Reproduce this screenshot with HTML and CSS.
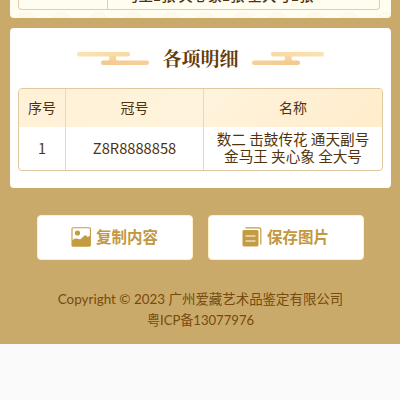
FILE: index.html
```html
<!DOCTYPE html>
<html lang="zh-CN">
<head>
<meta charset="utf-8">
<title>各项明细</title>
<link rel="stylesheet" href="styles.css">
</head>
<body>
<main class="page">
  <section class="summary">
    <div class="summary-table">
      <div class="summary-label"></div>
      <div class="summary-value"><span>马王1张 夹心象1张 全大号1张</span></div>
    </div>
    <svg class="waves" width="381" height="8" viewBox="0 0 381 8">
      <defs>
        <pattern id="wave" width="36" height="12" patternUnits="userSpaceOnUse">
          <g fill="none" stroke="#fbf3dc" stroke-width="1.2">
            <circle cx="16" cy="12" r="9"/><circle cx="16" cy="12" r="6"/><circle cx="16" cy="12" r="3"/>
          </g>
        </pattern>
      </defs>
      <rect width="381" height="8" fill="url(#wave)"/>
    </svg>
  </section>

  <section class="detail">
    <header class="detail-head">
      <svg class="cloud" width="74" height="16" viewBox="0 0 74 16">
        <defs>
          <linearGradient id="c1"><stop offset="0" stop-color="#fbe3b4"/><stop offset="1" stop-color="#f8d9a2"/></linearGradient>
          <linearGradient id="c2"><stop offset="0" stop-color="#f4c98d"/><stop offset="1" stop-color="#f6d09b"/></linearGradient>
        </defs>
        <path d="M32 5h9q-2 3 0 6h-9q3-3 0-6z" fill="#f7d49c"/>
        <rect x="1" y="2" width="53" height="4.4" rx="2" fill="url(#c1)"/>
        <rect x="25" y="10.6" width="48" height="4.4" rx="2" fill="url(#c2)"/>
      </svg>
      <h2>各项明细</h2>
      <svg class="cloud flip" width="74" height="16" viewBox="0 0 74 16">
        <path d="M32 5h9q-2 3 0 6h-9q3-3 0-6z" fill="#f7d49c"/>
        <rect x="1" y="2" width="53" height="4.4" rx="2" fill="url(#c1)"/>
        <rect x="25" y="10.6" width="48" height="4.4" rx="2" fill="url(#c2)"/>
      </svg>
    </header>
    <div class="table">
      <div class="row head"><div>序号</div><div>冠号</div><div>名称</div></div>
      <div class="row"><div>1</div><div class="code">Z8R8888858</div><div class="names">数二 击鼓传花 通天副号<br>金马王 夹心象 全大号</div></div>
    </div>
  </section>

  <div class="actions">
    <button class="btn">
      <svg width="20" height="20" viewBox="0 0 20 20">
        <rect x="1" y=".7" width="18.4" height="18.6" rx="1.2" fill="#fff" stroke="#c59b42" stroke-width="1.1"/>
        <circle cx="6.5" cy="6" r="2.6" fill="#c59b42"/>
        <path d="M1 13.500Q3.500 11 5.500 11.500T9.500 12.200L13.500 8.500Q14.800 7.500 16 9.500Q17 10.500 19 8.500V19H1z" fill="#c59b42"/>
      </svg>
      <span>复制内容</span>
    </button>
    <button class="btn">
      <svg width="20" height="20" viewBox="0 0 20 20">
        <path d="M3.500 .8H17q1.800 0 1.800 1.800V17.500" fill="none" stroke="#c59b42" stroke-width="1.200"/>
        <rect x=".5" y="3" width="16" height="16.500" rx="1.500" fill="#c59b42"/>
        <path d="M3.500 9h10M3.500 14h10" stroke="#fff" stroke-width="1.200"/>
      </svg>
      <span>保存图片</span>
    </button>
  </div>

  <footer class="footer">
    <p>Copyright © 2023 广州爱藏艺术品鉴定有限公司</p>
    <p class="icp">粤ICP备13077976</p>
  </footer>
</main>
</body>
</html>
```
FILE: styles.css
```css
* { box-sizing: border-box; }
body {
  margin: 0;
  background: #fafafa;
  color: #50330e;
  font-family: "Noto Sans CJK SC", sans-serif;
}
.page {
  height: 344px;
  background: #caaa6a;
  padding: 0 9px 0 10px;
  overflow: hidden;
}
.summary {
  height: 18px;
  background: #fffdf0;
  border-radius: 0 0 4px 4px;
  padding: 0 11px 0 8px;
  overflow: hidden;
}
.summary-table {
  height: 10px;
  display: flex;
  border: 1px solid #e0cfa9;
  border-top: 0;
  border-radius: 0 0 4px 4px;
  overflow: hidden;
}
.summary-label { width: 89px; border-right: 1px solid #e0cfa9; }
.summary-value {
  flex: 1;
  display: flex;
  align-items: flex-end;
  font-size: 14.4px;
  font-weight: 500;
  line-height: 20px;
  padding: 0 0 4px 16px;
  white-space: nowrap;
}
.waves { display: block; margin-left: -8px; }
.detail {
  height: 160px;
  margin-top: 10px;
  padding: 18px 8px 0;
  background: #fff;
  border-radius: 4px;
}
.detail-head {
  display: flex;
  justify-content: center;
  align-items: center;
  height: 24px;
  gap: 12.500px;
}
.detail-head h2 {
  margin: 0;
  font: 700 19px/24px "Noto Serif CJK SC", "Noto Serif SC", "Noto Sans CJK SC", serif;
  color: #653c0c;
}
.cloud { display: block; }
.flip { transform: scaleX(-1); }
.table {
  margin-top: 18px;
  height: 83px;
  border: 1px solid #e0c89f;
  border-radius: 4px;
  overflow: hidden;
  font-size: 14.400px;
}
.row {
  display: grid;
  grid-template-columns: 47px 138px 1fr;
  height: 43px;
  text-align: center;
}
.row > div {
  display: flex;
  align-items: center;
  justify-content: center;
  border-right: 1px solid #ead9b9;
  padding-bottom: 2px;
}
.row > div:last-child { border-right: 0; }
.head { height: 38px; font-size: 14px; background: linear-gradient(135deg, #fff1d7, #fff3dc 50%, #ffeccb); }
.code { font-size: 14.700px; }
.row > .names { font-size: 14.600px; line-height: 17px; padding-bottom: 4px; }
.actions {
  display: flex;
  gap: 15px;
  margin: 27px 0 0 27px;
}
.btn {
  width: 156px;
  height: 45px;
  border: 1px solid #fff0c6;
  border-radius: 4px;
  background: #fff;
  display: flex;
  align-items: center;
  justify-content: center;
  gap: 5px;
  padding: 0 1px 1px 0;
  color: #c39840;
  font: 700 15.500px/20px "Noto Sans CJK SC", sans-serif;
}
.btn span { padding-bottom: 2px; }
.footer {
  margin-top: 29px;
  text-align: center;
  color: #774a0d;
  font-family: Lato, "Noto Sans CJK SC", sans-serif;
  font-size: 13.450px;
  line-height: 21px;
}
.footer p { margin: 0; }
.footer .icp { font-size: 13.100px; }
```
